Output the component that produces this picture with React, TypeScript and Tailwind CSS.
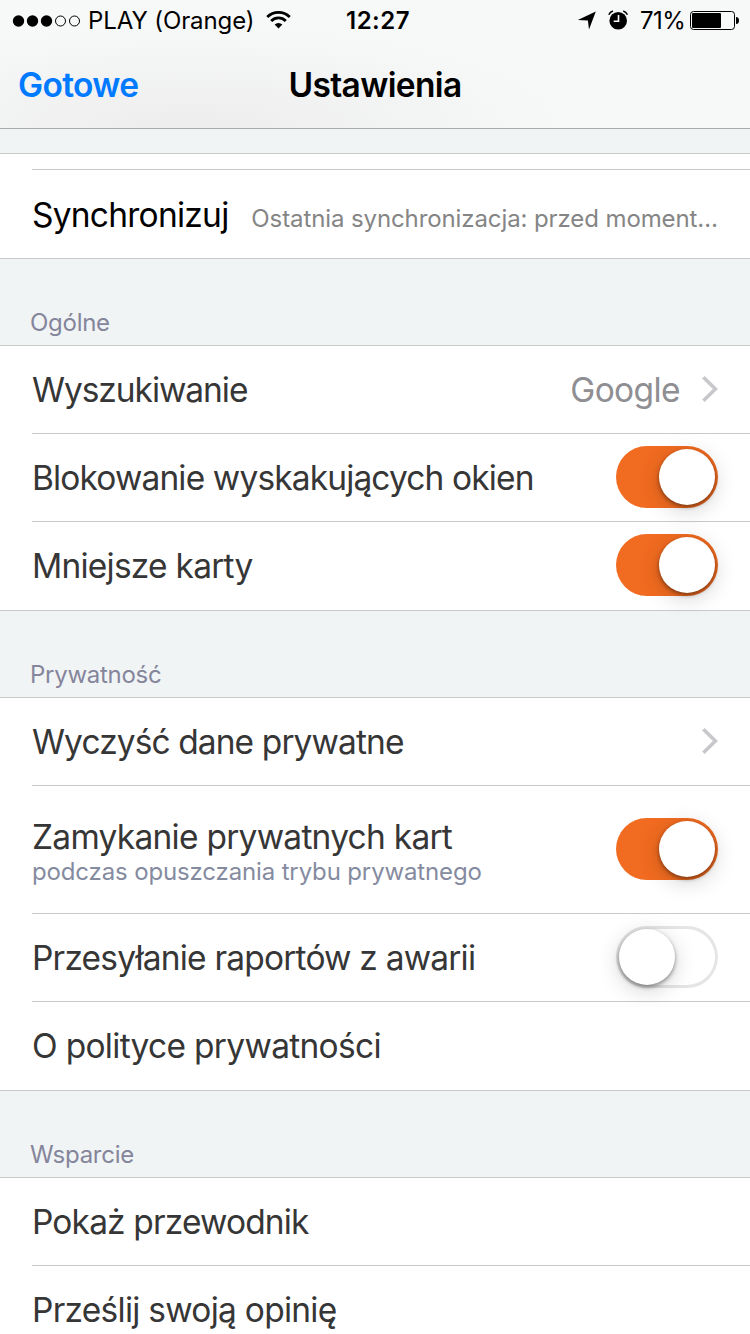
import type { ReactNode } from "react";
import clsx from "clsx";

type RowProps = {
  label: string;
  labelClass?: string;
  hint?: string;
  last?: boolean;
  tall?: boolean;
  children?: ReactNode;
};

function Switch({ on }: { on: boolean }) {
  return (
    <span
      role="switch"
      aria-checked={on}
      className={clsx(
        "flex h-[62px] w-[102px] shrink-0 items-center rounded-full p-[3px]",
        on ? "justify-end bg-[#f16b20]" : "bg-white shadow-[inset_0_0_0_3px_#e5e5e5]",
      )}
    >
      <span className="size-14 rounded-full bg-white shadow-[0_2px_4px_rgba(0,0,0,0.42),0_5px_22px_rgba(0,0,0,0.18)]" />
    </span>
  );
}

function Chevron() {
  return (
    <svg width="18" height="28" viewBox="0 0 18 28" fill="none" stroke="#c7c7cc" strokeWidth="3.6" className="shrink-0">
      <path d="M3.4 2.3 15.4 14 3.4 25.7" />
    </svg>
  );
}

function Row({ label, labelClass, hint, last, tall, children }: RowProps) {
  return (
    <div
      className={clsx(
        "ml-8 flex items-center justify-between pr-8",
        tall ? "h-32" : "h-[88px]",
        last ? "pb-[2px]" : "border-b border-[#c8c9cb] pb-px",
      )}
    >
      <div className={clsx("flex flex-col", hint ? "pt-1.5" : "pt-0.5")}>
        <span className={clsx("whitespace-nowrap text-[33.5px] leading-10 text-[#363636]", labelClass)}>{label}</span>
        {hint ? <span className="whitespace-nowrap text-[24px] leading-[30px] tracking-[-0.14px] text-[#858b9f]">{hint}</span> : null}
      </div>
      {children}
    </div>
  );
}

function Section({ title, children }: { title: string; children: ReactNode }) {
  return (
    <section>
      <h2 className="flex h-[86px] items-end pb-[6px] pl-[30px] text-[24px] leading-8 tracking-[-0.27px] text-[#85859b]">{title}</h2>
      <div className="border-y border-[#c8c9cb] bg-white">{children}</div>
    </section>
  );
}

function StatusBar() {
  return (
    <div className="flex h-10 items-center">
      <svg width="70" height="14" viewBox="0 0 70 14" className="ml-3 mt-px shrink-0">
        <circle cx="6.5" cy="7" r="5.7" />
        <circle cx="20.5" cy="7" r="5.7" />
        <circle cx="34.5" cy="7" r="5.7" />
        <circle cx="48.5" cy="7" r="5" fill="none" stroke="#000" />
        <circle cx="62.5" cy="7" r="5" fill="none" stroke="#000" />
      </svg>
      <span className="ml-1.5 w-[172px] whitespace-nowrap pt-0.5 text-[24px] leading-10 tracking-[-0.1px]">PLAY (Orange)</span>
      <svg width="25" height="20" viewBox="0 0 26 20" fill="none" stroke="#000" strokeWidth="2.9" className="ml-1.5 shrink-0">
        <path d="M1.3 6.9a16.6 16.6 0 0 1 23.4 0" />
        <path d="M5.4 11a10.8 10.8 0 0 1 15.2 0" />
        <path d="M13 18.8l-4-4a5.7 5.7 0 0 1 8 0z" fill="#000" stroke="none" />
      </svg>
      <span className="ml-[55px] w-[66px] whitespace-nowrap pt-0.5 text-[24px] font-semibold leading-10 tracking-[0.5px]">12:27</span>
      <div className="ml-auto flex items-center">
        <svg width="19" height="19" viewBox="0 0 19 19" className="mt-px shrink-0">
          <path d="M18.8.5 12 18.4 10.9 9.4.8 9.1z" />
        </svg>
        <svg width="20" height="20" viewBox="0 0 20 20" className="ml-3 shrink-0">
          <circle cx="10.2" cy="10.7" r="8.8" />
          <path d="M.8 4.8A6 6 0 0 1 5 1.1M19.4 4.8A6 6 0 0 0 15.2 1.1" fill="none" stroke="#000" strokeWidth="1.5" />
          <path d="M10.5 5v6.2H5.7" fill="none" stroke="#fff" strokeWidth="1.6" />
        </svg>
        <span className="ml-3 w-[44px] whitespace-nowrap pt-0.5 text-[24px] leading-10 tracking-[-0.5px]">71%</span>
        <svg width="50" height="20" viewBox="0 0 50 20" className="ml-1.5 mr-[10px] shrink-0">
          <rect x=".5" y="1.5" width="44" height="18" rx="3" fill="none" stroke="#000" />
          <rect x="2" y="3" width="29" height="15" rx="1" />
          <path d="M46 7a3 3.5 0 0 1 0 7z" />
        </svg>
      </div>
    </div>
  );
}

export default function App() {
  return (
    <div className="h-[1334px] w-[750px] overflow-hidden bg-[#f0f4f5] font-['Inter','Liberation_Sans',sans-serif] text-black">
      <header className="h-[129px] border-b border-[#a9abad] bg-[#f7f8f8] bg-[radial-gradient(ellipse_380px_105px_at_190px_129px,#ededed,#f7f8f8)]">
        <StatusBar />
        <div className="grid h-[88px] grid-cols-[1fr_auto_1fr] items-center px-[18px] pt-0.5 text-[33.5px] font-semibold leading-10 tracking-[-0.65px]">
          <span className="text-[#007aff]">Gotowe</span>
          <h1>Ustawienia</h1>
        </div>
      </header>

      <main>
        <div className="mt-6 border-y border-[#c8c9cb] bg-white">
          <div className="ml-8 h-4 border-b border-[#c8c9cb]" />
          <div className="ml-8 flex h-[88px] items-center justify-between pr-8">
            <span className="whitespace-nowrap pt-0.5 text-[33.5px] leading-10 tracking-[-0.75px]">Synchronizuj</span>
            <span className="whitespace-nowrap pt-2.5 text-[24px] leading-8 tracking-[-0.1px] text-[#858585]">
              Ostatnia synchronizacja: przed moment…
            </span>
          </div>
        </div>

        <Section title="Ogólne">
          <Row label="Wyszukiwanie" labelClass="tracking-[-1.05px]">
            <div className="flex items-center gap-5">
              <span className="pt-0.5 text-[33.5px] leading-10 tracking-[-0.6px] text-[#8e8e93]">Google</span>
              <Chevron />
            </div>
          </Row>
          <Row label="Blokowanie wyskakujących okien" labelClass="tracking-[-0.86px]">
            <Switch on />
          </Row>
          <Row label="Mniejsze karty" labelClass="tracking-[-0.77px]" last>
            <Switch on />
          </Row>
        </Section>

        <Section title="Prywatność">
          <Row label="Wyczyść dane prywatne" labelClass="tracking-[-0.9px]">
            <Chevron />
          </Row>
          <Row
            label="Zamykanie prywatnych kart"
            labelClass="tracking-[-0.74px]"
            hint="podczas opuszczania trybu prywatnego"
            tall
          >
            <Switch on />
          </Row>
          <Row label="Przesyłanie raportów z awarii" labelClass="tracking-[-0.8px]">
            <Switch on={false} />
          </Row>
          <Row label="O polityce prywatności" labelClass="tracking-[-0.7px]" last />
        </Section>

        <Section title="Wsparcie">
          <Row label="Pokaż przewodnik" labelClass="tracking-[-0.85px]" />
          <Row label="Prześlij swoją opinię" labelClass="tracking-[-0.74px]" last />
        </Section>
      </main>
    </div>
  );
}
